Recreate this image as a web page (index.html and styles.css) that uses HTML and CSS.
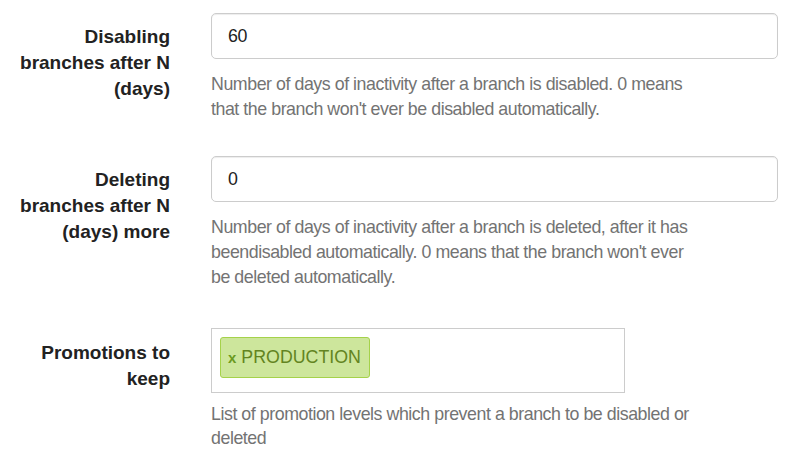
FILE: index.html
```html
<!DOCTYPE html>
<html>
<head>
<meta charset="utf-8">
<link rel="stylesheet" href="styles.css">
</head>
<body>
<form class="form">
  <div class="group g1">
    <label class="label">Disabling<br>branches after N<br>(days)</label>
    <div class="field">
      <div class="input">60</div>
      <p class="help">Number of days of inactivity after a branch is disabled. 0 means that the branch won't ever be disabled automatically.</p>
    </div>
  </div>
  <div class="group g2">
    <label class="label">Deleting<br>branches after N<br>(days) more</label>
    <div class="field">
      <div class="input">0</div>
      <p class="help">Number of days of inactivity after a branch is deleted, after it has beendisabled automatically. 0 means that the branch won't ever be deleted automatically.</p>
    </div>
  </div>
  <div class="group g3">
    <label class="label">Promotions to<br>keep</label>
    <div class="field">
      <div class="tags"><span class="tag"><b class="x">x</b>PRODUCTION</span></div>
      <p class="help help3">List of promotion levels which prevent a branch to be disabled or deleted</p>
    </div>
  </div>
</form>
</body>
</html>
```
FILE: styles.css
```css
html, body {
  margin: 0;
  padding: 0;
  background: #fff;
}
body {
  font-family: "Liberation Sans", Arial, sans-serif;
  font-size: 17.8px;
  color: #333;
  width: 800px;
  height: 467px;
  overflow: hidden;
}
.form {
  display: flex;
  flex-direction: column;
  padding-top: 13px;
}
.group {
  display: grid;
  grid-template-columns: 170px 567px;
  column-gap: 41px;
}
.g1 { margin-bottom: 35px; }
.g2 { margin-bottom: 38px; }
.label {
  text-align: right;
  font-weight: bold;
  font-size: 19px;
  line-height: 26px;
  padding-top: 11px;
  color: #222;
}
.g3 .label { padding-top: 12px; }
.input {
  height: 46px;
  box-sizing: border-box;
  border: 1px solid #ccc;
  border-radius: 5px;
  box-shadow: inset 0 1px 1px rgba(0,0,0,0.075);
  padding: 0 16px;
  line-height: 44px;
  color: #222;
  letter-spacing: -0.3px;
}
.help {
  margin: 13px 0 0;
  width: 490px;
  color: #737373;
  line-height: 24.7px;
  letter-spacing: -0.45px;
}
.help3 { margin-top: 9px; }
.tags {
  width: 414px;
  height: 65px;
  box-sizing: border-box;
  border: 1px solid #ccc;
  padding: 8px;
}
.tag {
  display: inline-flex;
  align-items: center;
  height: 41px;
  box-sizing: border-box;
  padding: 0 8px 0 7px;
  background: #cde69c;
  border: 1px solid #a5d24a;
  border-radius: 3px;
  color: #638421;
}
.x {
  font-size: 15px;
  margin-right: 5px;
  color: #6b9a1f;
}
```
